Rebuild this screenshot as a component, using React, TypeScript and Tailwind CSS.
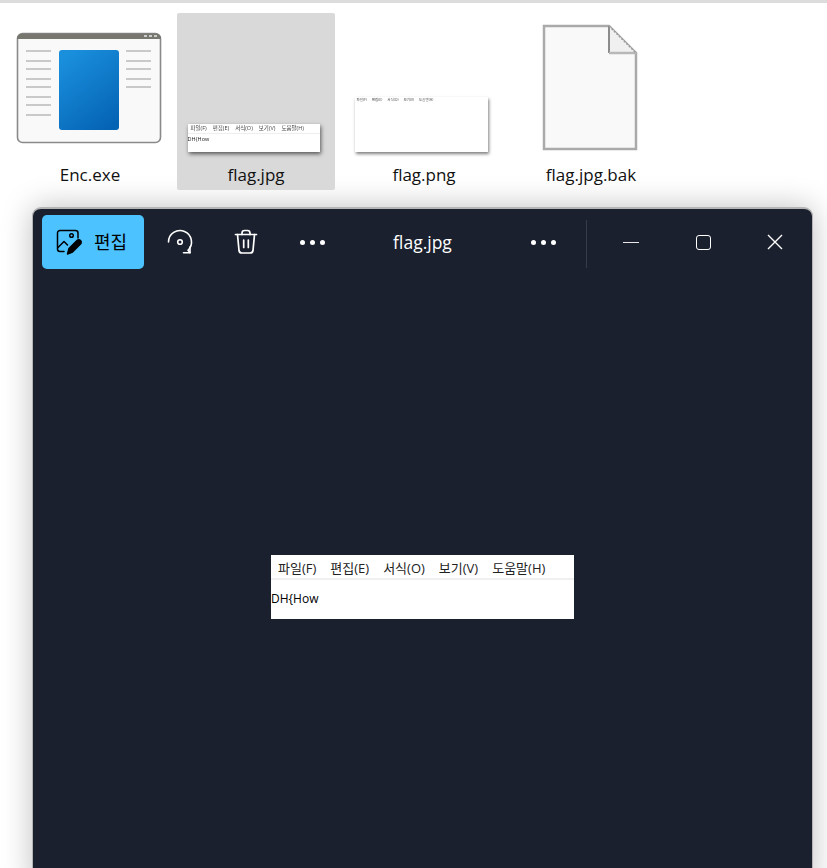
const uiFont = "[font-family:'Open_Sans','Noto_Sans_CJK_KR',sans-serif]";

const menuItems = ["파일(F)", "편집(E)", "서식(O)", "보기(V)", "도움말(H)"];

function EncIcon() {
  const left = [50, 60, 68, 78, 86, 96, 104, 114];
  const right = [50, 60, 68, 78, 86];
  return (
    <svg width="146" height="112" viewBox="16 32 146 112" className="blur-[0.3px]">
      <rect x="17.500" y="33.500" width="143" height="109" rx="5" fill="#f9f9f9" stroke="#8a8a8a" strokeWidth="1.600" />
      <path d="M17 39a5 5 0 0 1 5-5.500h134a5 5 0 0 1 5 5.500z" fill="#77776f" />
      <rect x="144" y="35" width="3" height="2" fill="#ccc" />
      <rect x="149" y="35" width="3" height="2" fill="#ccc" />
      <rect x="154" y="35" width="3" height="2" fill="#ccc" />
      {left.map((y) => (
        <rect key={y} x="26" y={y} width="25" height="2" fill="#c9c9c9" />
      ))}
      {right.map((y) => (
        <rect key={y} x="126" y={y} width="25" height="2" fill="#c9c9c9" />
      ))}
      <defs>
        <linearGradient id="encBlue" x1="0.2" y1="0" x2="0.8" y2="1">
          <stop offset="0" stopColor="#1a90dd" />
          <stop offset="1" stopColor="#0563b4" />
        </linearGradient>
      </defs>
      <rect x="59" y="50" width="60" height="80" rx="3" fill="url(#encBlue)" />
    </svg>
  );
}

function FileIcon() {
  return (
    <svg width="98" height="128" viewBox="542 24 98 128">
      <path d="M544 26h65l27 27v96h-92z" fill="#f9f9f9" stroke="#aaaaaa" strokeWidth="2.500" />
      <path d="M609 26v27h27z" fill="#f0f0f0" />
      <path d="M609 26v27" stroke="#8c8c8c" strokeWidth="2" fill="none" />
      <path d="M609 53h27" stroke="#b8b8b8" strokeWidth="2.500" fill="none" />
      <path d="M609 26l27 27" stroke="#9a9a9a" strokeWidth="1.500" strokeDasharray="2 1.500" fill="none" />
    </svg>
  );
}

function JpgThumb() {
  return (
    <div className="mb-[7px] mr-[5px] h-[28px] w-[132px] bg-white shadow-[1px_2px_4px_rgba(0,0,0,0.6)] blur-[0.3px]">
      <div className="flex h-[10px] items-center gap-[6px] border-b border-[#eeeeee] pl-[3px] text-[5.500px] leading-none text-[#444444]">
        {menuItems.map((m) => (
          <span key={m}>{m}</span>
        ))}
      </div>
      <div className="pt-[3px] text-[5.500px] leading-none text-[#222222]">DH{"{"}How</div>
    </div>
  );
}

function PngThumb() {
  return (
    <div className="mb-[7px] mr-[6px] h-[55px] w-[133px] bg-white shadow-[1px_2px_3px_rgba(0,0,0,0.5)] blur-[0.3px]">
      <div className="flex h-[6px] items-center gap-[5px] pl-[2px] text-[3.500px] leading-none text-[#444444]">
        {menuItems.map((m) => (
          <span key={m}>{m}</span>
        ))}
      </div>
    </div>
  );
}

function Tile({
  label,
  active,
  className,
  children,
}: {
  label: string;
  active?: boolean;
  className?: string;
  children: React.ReactNode;
}) {
  return (
    <div
      className={`flex h-[177px] w-[158px] flex-col items-center rounded-[2px] ${active ? "bg-[#d9d9d9]" : ""} ${className ?? ""}`}
    >
      <div className="flex h-[146px] w-full flex-col items-center justify-end">{children}</div>
      <div className="mt-[4px] text-[17px] leading-[24px] text-[#111111]">{label}</div>
    </div>
  );
}

function EditImageIcon() {
  return (
    <svg width="26" height="26" viewBox="0 0 26 26" fill="none" stroke="#000" strokeWidth="1.500" strokeLinecap="round" strokeLinejoin="round">
      <path d="M8 22.500H4A2.500 2.500 0 0 1 1.500 20V4A2.500 2.500 0 0 1 4 1.500h15.500A2.500 2.500 0 0 1 22 4v5" />
      <path d="M2 18.500l6-6 3.500 3.500" />
      <circle cx="15.500" cy="6.500" r="1.800" />
      <path d="M11.500 25l1.500-5.500 8-8a2 2 0 0 1 3.500 3.500l-8 8z" fill="#000" />
    </svg>
  );
}

function RotateIcon() {
  return (
    <svg width="28" height="28" viewBox="0 0 28 28" fill="none" stroke="#fff" strokeWidth="1.600" strokeLinecap="round" strokeLinejoin="round">
      <path d="M2.500 14A11.500 11.500 0 1 1 22 22.300L24 24.700" />
      <path d="M17.500 24.700H24V19" />
      <circle cx="14" cy="14" r="2.300" />
    </svg>
  );
}

function TrashIcon() {
  return (
    <svg width="24" height="26" viewBox="0 0 24 26" fill="none" stroke="#fff" strokeWidth="1.700" strokeLinecap="round" strokeLinejoin="round">
      <path d="M1.500 5.500h21" />
      <path d="M8 5.500V4a2.500 2.500 0 0 1 2.500-2.500h3A2.500 2.500 0 0 1 16 4v1.500" />
      <path d="M3.500 5.500l1.500 16a3 3 0 0 0 3 2.500h8a3 3 0 0 0 3-2.500l1.500-16" />
      <path d="M9.700 11v7.500M14.300 11v7.500" />
    </svg>
  );
}

function Dots() {
  return (
    <div className="flex items-center gap-[5px]">
      <span className="size-[5px] rounded-full bg-white" />
      <span className="size-[5px] rounded-full bg-white" />
      <span className="size-[5px] rounded-full bg-white" />
    </div>
  );
}

function ToolButton({ children }: { children: React.ReactNode }) {
  return <div className="flex h-[54px] w-[66px] items-center justify-center">{children}</div>;
}

function WinButton({ children }: { children: React.ReactNode }) {
  return <div className="flex h-[54px] w-[72px] items-center justify-center">{children}</div>;
}

export default function App() {
  return (
    <div className={`h-[868px] w-[827px] overflow-hidden bg-white ${uiFont}`}>
      <div className="h-[3px] bg-[#dcdcdc]" />
      <div className="flex h-[204px] pl-[11px] pt-[10px]">
        <Tile label="Enc.exe">
          <div className="mb-[15px] mr-[2px]">
            <EncIcon />
          </div>
        </Tile>
        <Tile label="flag.jpg" active className="ml-[8px]">
          <JpgThumb />
        </Tile>
        <Tile label="flag.png" className="ml-[10px]">
          <PngThumb />
        </Tile>
        <Tile label="flag.jpg.bak" className="ml-[9px]">
          <div className="mb-[7px]">
            <FileIcon />
          </div>
        </Tile>
      </div>

      <div className="ml-[32px] h-[680px] w-[781px] rounded-t-[9px] border-x border-t-2 border-[#b5b5b5] bg-[#1a202e] shadow-[0_0_30px_rgba(0,0,0,0.25)]">
        <div className="flex h-[68px] items-start pl-[9px] pt-[6px]">
          <div className="flex h-[54px] w-[102px] items-center rounded-[5px] bg-[#4cc2ff] pl-[14px]">
            <EditImageIcon />
            <span className="ml-[12px] text-[18px] text-black">편집</span>
          </div>
          <div className="ml-[3px] flex">
            <ToolButton>
              <RotateIcon />
            </ToolButton>
            <ToolButton>
              <TrashIcon />
            </ToolButton>
            <ToolButton>
              <Dots />
            </ToolButton>
          </div>
          <div className="flex h-[54px] w-[155px] items-center justify-center text-[17.500px] text-white">flag.jpg</div>
          <div className="ml-[10px]">
            <ToolButton>
              <Dots />
            </ToolButton>
          </div>
          <div className="ml-[10px] mt-[5px] h-[48px] w-px bg-[#363c48]" />
          <div className="ml-[8px] flex">
            <WinButton>
              <span className="h-px w-[16px] bg-[#e8e8e8]" />
            </WinButton>
            <WinButton>
              <span className="size-[15px] rounded-[3px] border-[1.500px] border-white" />
            </WinButton>
            <WinButton>
              <svg width="16" height="16" viewBox="0 0 16 16" stroke="#fff" strokeWidth="1.400">
                <path d="M1 1l14 14M15 1L1 15" />
              </svg>
            </WinButton>
          </div>
        </div>

        <div className="flex justify-center pt-[278px]">
          <div className="h-[64px] w-[303px] bg-white">
            <div className="flex h-[25px] items-center gap-[14px] border-b-2 border-[#f0f0f0] pl-[7px] pt-[4px] text-[13px] leading-none text-[#222222]">
              {menuItems.map((m) => (
                <span key={m}>{m}</span>
              ))}
            </div>
            <div className="pt-[13px] text-[12px] font-medium leading-none text-black">DH{"{"}How</div>
          </div>
        </div>
      </div>
    </div>
  );
}
